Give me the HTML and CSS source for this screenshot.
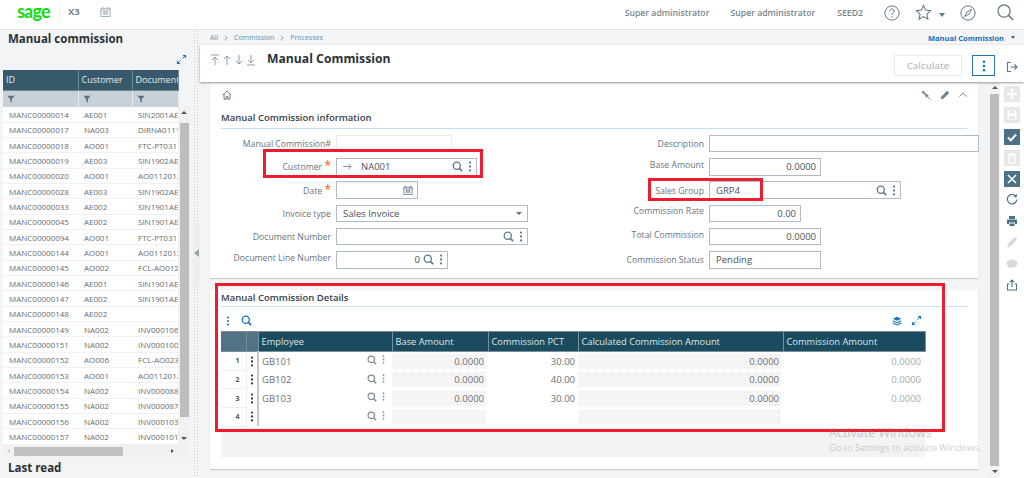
FILE: index.html
```html
<!DOCTYPE html>
<html lang="en">
<head>
<meta charset="utf-8">
<title>Manual Commission</title>
<link rel="stylesheet" href="styles.css">
</head>
<body>
<svg class="defs" width="0" height="0" aria-hidden="true">
  <symbol id="search" viewBox="0 0 12 12"><circle cx="5.2" cy="5.2" r="3.9" fill="none" stroke="currentColor" stroke-width="1.4"/><path d="M8 8l3 3" stroke="currentColor" stroke-width="1.8" fill="none"/></symbol>
  <symbol id="kebab" viewBox="0 0 4 12"><circle cx="2" cy="1.7" r="1.25" fill="currentColor"/><circle cx="2" cy="6" r="1.25" fill="currentColor"/><circle cx="2" cy="10.3" r="1.25" fill="currentColor"/></symbol>
  <symbol id="expand" viewBox="0 0 12 12"><path d="M7 1h4v4zM1 7v4h4z" fill="currentColor"/><path d="M9.5 2.5L7 5M2.5 9.5L5 7" stroke="currentColor" fill="none"/></symbol>
  <symbol id="funnel" viewBox="0 0 10 10"><path d="M.5 1h9L6 5v4.500L4 8V5z" fill="currentColor"/></symbol>
  <symbol id="cal" viewBox="0 0 12 12"><path d="M1 2.500h10v9H1z" fill="none" stroke="currentColor"/><path d="M1 4.500h10M3 1v2M9 1v2M3 6.500h6M3 8.500h6M4.500 5v5M7.500 5v5" stroke="currentColor" stroke-width=".8" fill="none"/></symbol>
</svg>

<header class="topbar">
  <div class="brand"><span class="sage">sage</span><span class="x3">X3</span><svg class="top-cal"><use href="#cal"/></svg></div>
  <nav class="top-links">
    <span class="top-link user-a">Super administrator</span>
    <span class="top-link user-b">Super administrator</span>
    <span class="top-link seed">SEED2</span>
    <svg class="ti help" viewBox="0 0 18 18"><circle cx="9" cy="9" r="8" fill="none" stroke="currentColor" stroke-width="1.100"/><path d="M6.500 7a2.500 2.500 0 1 1 3.900 2c-1 .7-1.400 1.100-1.400 2.200" fill="none" stroke="currentColor" stroke-width="1.100"/><circle cx="9" cy="13.500" r=".8" fill="currentColor"/></svg>
    <svg class="ti star" viewBox="0 0 18 18"><path d="M9 1.500l2.300 5 5.200.6-3.900 3.600 1.100 5.300L9 13.300 4.300 16l1.100-5.300-3.900-3.600 5.200-.6z" fill="none" stroke="currentColor" stroke-width="1.100"/></svg>
    <span class="caret"></span>
    <svg class="ti compass" viewBox="0 0 18 18"><circle cx="9" cy="9" r="8" fill="none" stroke="currentColor" stroke-width="1.100"/><path d="M13 5L10.200 10.200 5 13 7.800 7.800z" fill="none" stroke="currentColor"/></svg>
    <svg class="ti glass" viewBox="0 0 18 18"><circle cx="7.500" cy="7.500" r="6.500" fill="none" stroke="currentColor" stroke-width="1.300"/><path d="M12 12l5 5" stroke="currentColor" stroke-width="1.600"/></svg>
  </nav>
</header>

<div class="app">
  <aside class="side">
    <h2 class="side-title">Manual commission</h2>
    <div class="side-expand"><svg class="ic-exp"><use href="#expand"/></svg></div>
    <div class="list-wrap">
      <div class="list-main">
        <table class="list">
          <colgroup><col class="c-id"><col class="c-cu"><col class="c-do"></colgroup>
          <thead>
            <tr class="list-head"><th>ID</th><th>Customer</th><th>Document</th></tr>
            <tr class="list-filter"><th><svg class="fn"><use href="#funnel"/></svg></th><th><svg class="fn"><use href="#funnel"/></svg></th><th><svg class="fn"><use href="#funnel"/></svg></th></tr>
          </thead>
          <tbody>
            <tr><td>MANC00000014</td><td>AE001</td><td>SIN2001AE</td></tr>
            <tr><td>MANC00000017</td><td>NA003</td><td>DIRNA0111</td></tr>
            <tr><td>MANC00000018</td><td>AO001</td><td>FTC-PT031</td></tr>
            <tr><td>MANC00000019</td><td>AE003</td><td>SIN1902AE</td></tr>
            <tr><td>MANC00000020</td><td>AO001</td><td>AO0112012</td></tr>
            <tr><td>MANC00000028</td><td>AE003</td><td>SIN1902AE</td></tr>
            <tr><td>MANC00000033</td><td>AE002</td><td>SIN1901AE</td></tr>
            <tr><td>MANC00000045</td><td>AE002</td><td>SIN1901AE</td></tr>
            <tr><td>MANC00000094</td><td>AO001</td><td>FTC-PT031</td></tr>
            <tr><td>MANC00000144</td><td>AO001</td><td>AO0112012</td></tr>
            <tr><td>MANC00000145</td><td>AO002</td><td>FCL-AO012</td></tr>
            <tr><td>MANC00000146</td><td>AE001</td><td>SIN1901AE</td></tr>
            <tr><td>MANC00000147</td><td>AE002</td><td>SIN1901AE</td></tr>
            <tr><td>MANC00000148</td><td>AE002</td><td></td></tr>
            <tr><td>MANC00000149</td><td>NA002</td><td>INV0001060</td></tr>
            <tr><td>MANC00000151</td><td>NA002</td><td>INV0001000</td></tr>
            <tr><td>MANC00000152</td><td>AO006</td><td>FCL-AO023</td></tr>
            <tr><td>MANC00000153</td><td>AO001</td><td>AO0112012</td></tr>
            <tr><td>MANC00000154</td><td>NA002</td><td>INV0000880</td></tr>
            <tr><td>MANC00000155</td><td>NA002</td><td>INV0000870</td></tr>
            <tr><td>MANC00000156</td><td>NA002</td><td>INV0001030</td></tr>
            <tr><td>MANC00000157</td><td>NA002</td><td>INV0001010</td></tr>
          </tbody>
        </table>
        <div class="hscroll"><span class="arrow-l"></span><span class="hthumb"></span><span class="arrow-r"></span></div>
      </div>
      <div class="vscroll"><span class="arrow-u"></span><span class="vthumb"></span><span class="arrow-d"></span></div>
    </div>
    <h2 class="side-foot">Last read</h2>
  </aside>

  <div class="split"><div class="split-handle"><span class="split-arrow"></span></div></div>

  <main class="main">
    <div class="crumbs">
      <div class="crumb-left"><span>All</span><i class="chev"></i><span>Commission</span><i class="chev"></i><span>Processes</span></div>
      <div class="crumb-right">Manual Commission<span class="crumb-caret"></span></div>
    </div>
    <div class="toolbar">
      <div class="nav-arrows">
        <svg class="na" viewBox="0 0 10 12"><path d="M1 1h8M5 3.500V11M2 6l3-3 3 3" fill="none" stroke="currentColor" stroke-width=".9"/></svg>
        <svg class="na" viewBox="0 0 10 12"><path d="M5 2v9M2 5l3-3 3 3" fill="none" stroke="currentColor" stroke-width=".9"/></svg>
        <svg class="na" viewBox="0 0 10 12"><path d="M5 1v9M2 7l3 3 3-3" fill="none" stroke="currentColor" stroke-width=".9"/></svg>
        <svg class="na" viewBox="0 0 10 12"><path d="M1 11h8M5 1v7.500M2 6l3 3 3-3" fill="none" stroke="currentColor" stroke-width=".9"/></svg>
      </div>
      <h1 class="page-title">Manual Commission</h1>
      <button class="calc">Calculate</button>
      <button class="more"><svg class="more-ic"><use href="#kebab"/></svg></button>
      <svg class="exit" viewBox="0 0 12 12"><path d="M5 1.500H1.500v9H5M4.500 6h6.500M8.500 3.500L11 6 8.500 8.500" fill="none" stroke="currentColor" stroke-width="1.100"/></svg>
    </div>

    <div class="work">
      <div class="content">
        <section class="card card-info">
          <div class="card-tools">
            <svg class="home" viewBox="0 0 12 12"><path d="M1 6l5-5 5 5M2.500 5v6h2.500V8h2v3h2.500V5" fill="none" stroke="currentColor" stroke-width=".9"/></svg>
            <span class="spacer"></span>
            <svg class="tool" viewBox="0 0 12 12"><path d="M1.500 3.500L3.500 1.500M3 3l5 5M6 8.500L8.500 6" fill="none" stroke="currentColor" stroke-width="2"/><path d="M8 8l3.500 3.500" fill="none" stroke="currentColor"/></svg>
            <svg class="tool" viewBox="0 0 12 12"><path d="M8.500 1L11 3.500 4 10.500 1 11l.5-3z" fill="currentColor"/></svg>
            <svg class="tool tool-last" viewBox="0 0 12 12"><path d="M1.500 8L6 3.500 10.500 8" fill="none" stroke="currentColor" stroke-width="1.100"/></svg>
          </div>
          <h3 class="sec-title">Manual Commission information</h3>
          <div class="form">
            <div class="col col-l">
              <div class="row"><label>Manual Commission#</label><div class="inp w116 faint"></div></div>
              <div class="row"><label>Customer <b class="req">*</b></label><div class="inp w141"><svg class="arrow-go" viewBox="0 0 10 8"><path d="M0 4h9M6 1l3 3-3 3" fill="none" stroke="currentColor"/></svg><span class="val grow">NA001</span><svg class="s"><use href="#search"/></svg><svg class="k"><use href="#kebab"/></svg></div></div>
              <div class="row"><label>Date <b class="req">*</b></label><div class="inp w82"><span class="grow"></span><svg class="datecal"><use href="#cal"/></svg></div></div>
              <div class="row"><label>Invoice type</label><div class="inp w192"><span class="val grow">Sales Invoice</span><span class="drop"></span></div></div>
              <div class="row"><label>Document Number</label><div class="inp w192"><span class="grow"></span><svg class="s"><use href="#search"/></svg><svg class="k"><use href="#kebab"/></svg></div></div>
              <div class="row up"><label>Document Line Number</label><div class="inp w112"><span class="val grow num">0</span><svg class="s"><use href="#search"/></svg><svg class="k"><use href="#kebab"/></svg></div></div>
            </div>
            <div class="col col-r">
              <div class="row"><label>Description</label><div class="inp w270"></div></div>
              <div class="row up"><label>Base Amount</label><div class="inp w112"><span class="val grow num">0.0000</span></div></div>
              <div class="row"><label>Sales Group</label><div class="inp w192"><span class="val grow">GRP4</span><svg class="s"><use href="#search"/></svg><svg class="k"><use href="#kebab"/></svg></div></div>
              <div class="row up"><label>Commission Rate</label><div class="inp w92"><span class="val grow num">0.00</span></div></div>
              <div class="row up"><label>Total Commission</label><div class="inp w112"><span class="val grow num">0.0000</span></div></div>
              <div class="row"><label>Commission Status</label><div class="inp w112"><span class="val grow">Pending</span></div></div>
            </div>
          </div>
        </section>

        <section class="card card-details">
          <h3 class="sec-title">Manual Commission Details</h3>
          <div class="grid-tools">
            <svg class="gt-k"><use href="#kebab"/></svg>
            <svg class="gt-s"><use href="#search"/></svg>
            <span class="spacer"></span>
            <svg class="gt-l" viewBox="0 0 12 12"><path d="M6 .8l5 2.400-5 2.400-5-2.400z" fill="currentColor"/><path d="M1 5.700l5 2.300 5-2.300M1 8.300l5 2.400 5-2.400" fill="none" stroke="currentColor" stroke-width="1.300"/></svg>
            <svg class="gt-e"><use href="#expand"/></svg>
          </div>
          <table class="grid">
            <colgroup><col class="g-n"><col class="g-m"><col class="g-e"><col class="g-b"><col class="g-p"><col class="g-c"><col class="g-a"></colgroup>
            <thead>
              <tr><th class="h-light"></th><th class="h-light"></th><th>Employee</th><th>Base Amount</th><th>Commission PCT</th><th>Calculated Commission Amount</th><th>Commission Amount</th></tr>
            </thead>
            <tbody>
              <tr><td class="n">1</td><td class="m"><svg class="gk"><use href="#kebab"/></svg></td><td class="e"><div class="e-in"><span class="grow">GB101</span><svg class="gs"><use href="#search"/></svg><svg class="gk2"><use href="#kebab"/></svg></div></td><td class="dot"><div class="dots">0.0000</div></td><td class="r">30.00</td><td class="dot"><div class="dots">0.0000</div></td><td class="r lite">0.0000</td></tr>
              <tr><td class="n">2</td><td class="m"><svg class="gk"><use href="#kebab"/></svg></td><td class="e"><div class="e-in"><span class="grow">GB102</span><svg class="gs"><use href="#search"/></svg><svg class="gk2"><use href="#kebab"/></svg></div></td><td class="dot"><div class="dots">0.0000</div></td><td class="r">40.00</td><td class="dot"><div class="dots">0.0000</div></td><td class="r lite">0.0000</td></tr>
              <tr><td class="n">3</td><td class="m"><svg class="gk"><use href="#kebab"/></svg></td><td class="e"><div class="e-in"><span class="grow">GB103</span><svg class="gs"><use href="#search"/></svg><svg class="gk2"><use href="#kebab"/></svg></div></td><td class="dot"><div class="dots">0.0000</div></td><td class="r">30.00</td><td class="dot"><div class="dots">0.0000</div></td><td class="r lite">0.0000</td></tr>
              <tr><td class="n">4</td><td class="m"><svg class="gk"><use href="#kebab"/></svg></td><td class="e"><div class="e-in"><span class="grow"></span><svg class="gs"><use href="#search"/></svg><svg class="gk2"><use href="#kebab"/></svg></div></td><td class="dot"><div class="dots">&nbsp;</div></td><td class="r"></td><td class="dot"><div class="dots">&nbsp;</div></td><td class="r lite"></td></tr>
            </tbody>
          </table>
          <div class="grid-foot"></div>
        </section>
      </div>

      <div class="main-scroll"><span class="arrow-u"></span><span class="mthumb"></span><span class="arrow-d"></span></div>

      <div class="rail">
        <span class="rb off"><svg viewBox="0 0 12 12"><path d="M6 1v10M1 6h10" stroke="#fff" stroke-width="2.400"/></svg></span>
        <span class="rb off"><svg viewBox="0 0 12 12"><path d="M1.500 1.500h7.500l1.500 1.500v7.500h-9z" fill="#fff"/><path d="M3.500 2h4v2.500h-4zM3 7h6v3H3z" fill="#e4e8ea"/></svg></span>
        <span class="rb on"><svg viewBox="0 0 12 12"><path d="M2 6.500l2.800 2.800L10 3.500" fill="none" stroke="#fff" stroke-width="2"/></svg></span>
        <span class="rb off"><svg viewBox="0 0 12 12"><path d="M3 4h6v7H3zM2 2.500h8M4.500 2.500V1.500h3v1" fill="none" stroke="#fff" stroke-width="1.200"/></svg></span>
        <span class="rb on"><svg viewBox="0 0 12 12"><path d="M2 2l8 8M10 2l-8 8" stroke="#fff" stroke-width="1.600"/></svg></span>
        <span class="rp"><svg viewBox="0 0 12 12"><path d="M10 3.500A4.700 4.700 0 1 0 10.800 6.500" fill="none" stroke="#4d7287" stroke-width="1.200"/><path d="M10.800 .8v3.400H7.400z" fill="#4d7287"/></svg></span>
        <span class="rp"><svg viewBox="0 0 12 12"><path d="M3 1h6v3H3zM1 4.500h10v4.500H9V7.500H3V9H1zM3.500 8.500h5V11h-5z" fill="#4d7287"/></svg></span>
        <span class="rp"><svg viewBox="0 0 12 12"><path d="M3 9.500L9 3" fill="none" stroke="#d7dadc" stroke-width="3.500" stroke-linecap="round"/></svg></span>
        <span class="rp"><svg viewBox="0 0 12 12"><ellipse cx="6" cy="5.500" rx="5.500" ry="4" fill="#d7dadc"/><path d="M3 8l-.8 2.800L6 9z" fill="#d7dadc"/></svg></span>
        <span class="rp"><svg viewBox="0 0 12 12"><path d="M3.500 5H1.500v6h9V5h-2M6 8V1M3.800 3.200L6 1l2.200 2.200" fill="none" stroke="#4d7287" stroke-width="1.100"/></svg></span>
      </div>
    </div>
  </main>
</div>

<div class="mark mark-customer"></div>
<div class="mark mark-group"></div>
<div class="mark mark-details"></div>
<div class="watermark"><div class="wm-1">Activate Windows</div><div class="wm-2">Go to Settings to activate Windows.</div></div>
</body>
</html>
```
FILE: styles.css
```css
* { box-sizing: border-box; }
html, body { margin: 0; height: 478px; overflow: hidden; }
body { position: relative; width: 1024px; font-family: "Open Sans", sans-serif; font-size: 9px; color: #5d6a72; background: #f2f4f5; display: flex; flex-direction: column; }
.defs { position: absolute; }
svg { display: block; flex: none; }
h1, h2, h3 { margin: 0; }

/* top bar */
.topbar { height: 30px; flex: none; background: #fff; border-bottom: 1px solid #e3e7e9; display: flex; align-items: center; justify-content: space-between; }
.brand { display: flex; align-items: center; height: 100%; padding-bottom: 6px; }
.sage { font-family: "Lato", sans-serif; font-weight: 700; font-size: 18px; letter-spacing: -.8px; color: #10dd10; margin-left: 17px; width: 43px; line-height: 19px; border-right: 1px solid #f0f2f3; height: 20px; }
.x3 { font-weight: 700; font-size: 9.500px; color: #7a858c; margin-left: 8px; }
.top-cal { width: 11px; height: 11px; margin-left: 20px; color: #97a7b1; }
.top-links { display: flex; align-items: center; color: #6d818d; height: 100%; padding-bottom: 4px; }
.top-link { font-size: 8.700px; font-weight: 600; color: #76858e; }
.user-b { margin-left: 21px; }
.seed { margin-left: 22px; }
.ti { color: #5a7888; }
.help { width: 16px; height: 16px; margin-left: 21px; }
.star { width: 17px; height: 17px; margin-left: 15px; }
.caret { width: 0; height: 0; border: 3px solid transparent; border-top: 4px solid #5a7888; border-bottom: 0; margin: 5px 0 0 7px; }
.compass { width: 16px; height: 16px; margin-left: 15px; }
.glass { width: 17px; height: 17px; margin: 0 10px 0 21px; }

.app { flex: 1; display: flex; min-height: 0; }

/* side panel */
.side { width: 193px; flex: none; display: flex; flex-direction: column; padding-left: 3px; }
.side-title { font-size: 11.500px; font-weight: 700; color: #2a3238; line-height: 16px; margin: 0 0 0 5px; padding-top: 1px; height: 16px; }
.side-expand { height: 24px; display: flex; justify-content: flex-end; padding: 8px 6px 0 0; }
.ic-exp { width: 11px; height: 11px; color: #1673c5; }
.list-wrap { display: flex; width: 187px; }
.list-main { width: 175px; }
.list { table-layout: fixed; border-collapse: collapse; width: 175px; background: #fff; }
.c-id { width: 75px; } .c-cu { width: 54px; } .c-do { width: 46px; }
.list th { font-weight: 400; text-align: left; overflow: hidden; white-space: nowrap; padding: 0 0 0 3px; }
.list-head th { height: 20px; background: #37596b; color: #e6ecef; font-size: 9px; border-right: 1px solid #6f8895; border-bottom: 1px solid #6f8895; }
.list-filter th { height: 17px; background: #c7d1d7; border-right: 1px solid #e5e9ec; vertical-align: middle; }
.fn { width: 8px; height: 8px; color: #537285; margin-left: 1px; }
.list td { height: 15.330px; padding: 0 0 0 6px; font-size: 8px; white-space: nowrap; overflow: hidden; color: #646d72; border-bottom: 1px solid #f0f1f2; }
.hscroll { height: 13px; width: 187px; background: #f1f1f1; display: flex; align-items: center; padding: 0 4px; }
.hthumb { width: 109px; height: 9px; background: #c1c1c1; margin-left: 4px; }
.arrow-l { width: 0; height: 0; border: 2px solid transparent; border-right: 3px solid #c9c9c9; border-left: 0; }
.arrow-r { width: 0; height: 0; border: 2.500px solid transparent; border-left: 3px solid #555; border-right: 0; margin-left: 48px; }
.vscroll { width: 12px; margin-top: 37px; height: 338px; background: #f1f1f1; display: flex; flex-direction: column; align-items: center; }
.vthumb { width: 9px; height: 294px; margin-top: 9px; background: #bdbdbd; }
.arrow-u { width: 0; height: 0; border: 3px solid transparent; border-bottom: 3px solid #555; border-top: 0; margin-top: 4px; }
.arrow-d { width: 0; height: 0; border: 3px solid transparent; border-top: 3px solid #555; border-bottom: 0; margin-top: auto; margin-bottom: 5px; }
.side-foot { font-size: 11.500px; font-weight: 700; color: #2a3238; margin: 0 0 0 5px; line-height: 16px; padding-top: 2px; }

.split { width: 7px; flex: none; display: flex; align-items: center; justify-content: center; padding-bottom: 2px; background-image: radial-gradient(#c7cdd1 .7px, transparent .8px); background-size: 3px 3px; }
.split-handle { width: 7px; height: 63px; background: #ecedec; display: flex; align-items: center; justify-content: center; }
.split-arrow { width: 0; height: 0; border: 4px solid transparent; border-right: 5px solid #9aa3a8; border-left: 0; }

/* main */
.main { flex: 1; min-width: 0; display: flex; flex-direction: column; }
.crumbs { height: 15px; flex: none; display: flex; align-items: center; justify-content: space-between; padding: 0 9px 0 10px; font-size: 7px; color: #5a93c4; }
.crumb-left { display: flex; align-items: center; }
.chev { width: 4px; height: 4px; border-top: 1px solid #b3bcc2; border-right: 1px solid #b3bcc2; transform: rotate(45deg); margin: 0 7px 0 5px; }
.crumb-right { font-weight: 700; color: #1c6fbc; display: flex; align-items: center; font-size: 7.500px; }
.crumb-caret { width: 0; height: 0; border: 2px solid transparent; border-top: 3px solid #1c6fbc; border-bottom: 0; margin-left: 7px; }
.toolbar { height: 37px; flex: none; background: #fff; display: flex; align-items: flex-start; box-shadow: 0 1px 2px rgba(60,70,75,.55); position: relative; padding-left: 10px; }
.nav-arrows { display: flex; gap: 2px; color: #7f959f; margin-top: 9px; width: 57px; }
.na { width: 10px; height: 12px; }
.page-title { font-size: 12.200px; font-weight: 700; color: #2a3238; line-height: 18px; margin-top: 5px; flex: 1; }
.calc { width: 68px; height: 21px; margin-top: 10px; background: #fff; border: 1px solid #e8eaeb; color: #bdc0c3; font: 600 9.500px "Open Sans", sans-serif; padding: 0; }
.more { width: 23px; height: 21px; margin: 10px 0 0 10px; background: #fff; border: 1px solid #2276b6; padding: 0; display: flex; align-items: center; justify-content: center; }
.more-ic { width: 4px; height: 12px; color: #1673bc; }
.exit { width: 12px; height: 12px; margin: 16px 6px 0 11px; color: #587684; }

.work { flex: 1; display: flex; min-height: 0; }
.content { width: 790px; padding: 1px 0 0 10px; flex: none; }
.card { width: 768px; background: #fff; box-shadow: 0 1px 1px #c9cccd; padding: 0 11px; }
.card-info { height: 195px; }
.card-details { height: 179px; margin-top: 12px; }
.card-tools { height: 22px; display: flex; align-items: center; padding: 1px 0 0 1px; color: #56666f; }
.home { width: 10px; height: 10px; color: #444f55; }
.spacer { flex: 1; }
.tool { width: 10px; height: 10px; margin-left: 9px; color: #68828f; }
.tool-last { margin: 0 -1px 0 8px; }
.sec-title { font-size: 9.500px; font-weight: 600; color: #33424c; line-height: 25px; height: 24px; border-bottom: 1px solid #c3e0f3; }
.card-details .sec-title { height: 17px; line-height: 16px; }
.form { display: flex; padding-top: 6px; }
.col { display: flex; flex-direction: column; gap: 6.300px; }
.col-l { width: 283px; }
.row { display: flex; height: 17px; align-items: center; }
.row label { text-align: right; flex: none; padding: 1px 5px 0 0; color: #66757e; font-size: 8.700px; white-space: nowrap; }
.row.up label { padding: 0 5px 4px 0; }
.col-l label { width: 115px; }
.col-r label { width: 205px; }
.req { color: #f05a22; font-size: 12px; font-weight: 400; line-height: 9px; }
.inp { height: 17.500px; border: 1px solid #adbcc6; display: flex; align-items: center; padding: 0 4px; background: #fff; flex: none; }
.faint { border-color: #e7ebee; }
.w116 { width: 116px; } .w141 { width: 141px; } .w82 { width: 82px; } .w192 { width: 192px; } .w112 { width: 112px; } .w270 { width: 270px; } .w92 { width: 92px; }
.val { font-size: 9.500px; color: #4c5358; padding-left: 2px; }
.grow { flex: 1; min-width: 0; }
.num { text-align: right; }
.arrow-go { color: #6c8492; width: 9px; height: 7px; margin: 0 7px 0 2px; }
.s { width: 11px; height: 11px; color: #587888; margin-left: 3px; }
.k { width: 4px; height: 11px; color: #687f8c; margin-left: 5px; }
.datecal { width: 10px; height: 10px; color: #5f7a89; }
.drop { width: 0; height: 0; border: 3px solid transparent; border-top: 3px solid #5a7080; border-bottom: 0; margin-right: 1px; }

/* details */
.grid-tools { height: 24px; display: flex; align-items: center; padding-top: 3px; color: #1673bc; width: 704px; }
.gt-k { width: 4px; height: 10px; margin-left: 5px; color: #1673bc; }
.gt-s { width: 11px; height: 11px; margin-left: 11px; color: #1673bc; }
.gt-l { width: 10px; height: 10px; color: #1673bc; }
.gt-e { width: 11px; height: 11px; margin: 0 3px 0 9px; color: #1673c5; }
.grid { table-layout: fixed; border-collapse: collapse; width: 704px; }
.g-n { width: 25px; } .g-m { width: 12px; } .g-e { width: 134px; } .g-b { width: 96px; } .g-p { width: 90px; } .g-c { width: 205px; } .g-a { width: 142px; }
.grid th { height: 20px; background: #1b4b5f; color: #dde6ea; font-weight: 400; font-size: 9.300px; text-align: left; padding: 0 0 0 3px; border: 1px solid #7b8f99; border-width: 1px 1px 1px 0; white-space: nowrap; overflow: hidden; }
.grid th.h-light { background: #527285; }
.grid td { height: 18.700px; padding: 0; font-size: 9.500px; color: #6a6f72; }
.grid .n { text-align: right; padding-right: 6px; font-size: 7px; font-weight: 700; color: #555; border-bottom: 1px solid #eceeef; border-right: 1px solid #eceeef; }
.grid .m { border-right: 2px solid #c2c7ca; }
.gk { width: 4px; height: 11px; color: #303c42; margin: 0 auto; }
.e-in { display: flex; align-items: center; padding: 0 2px 0 3px; }
.gs { width: 10px; height: 10px; color: #7d8a91; margin-top: -2px; }
.gk2 { width: 3px; height: 9px; color: #8b979e; margin: -3px 5px 0 5px; }
.r { text-align: right; padding-right: 3px !important; }
.dots { height: 15px; margin-right: 2px; padding-right: 2px; text-align: right; line-height: 15px; background: repeating-conic-gradient(#ececec 0 25%, #fff 0 50%) 0 0 / 2px 2px; }
.grid td.lite { color: #a6aaac; padding-right: 4px !important; }
.grid-foot { height: 29px; width: 704px; background: #f2f3f4; margin-top: 1px; }

.main-scroll { width: 9px; background: #f1f1f1; display: flex; flex-direction: column; align-items: center; flex: none; }
.mthumb { width: 9px; height: 372px; margin-top: 5px; background: #bcbcbc; }
.rail { flex: 1; background: #fff; margin-left: 1px; display: flex; flex-direction: column; align-items: center; padding-top: 4px; }
.rb { width: 16px; height: 16px; margin-bottom: 5.300px; display: flex; align-items: center; justify-content: center; }
.rb svg { width: 12px; height: 12px; }
.off { background: #e4e8ea; }
.on { background: #4d7287; }
.rp { width: 12px; height: 12px; margin-bottom: 9.500px; }
.rb + .rp { margin-top: 1px; }
.rp svg { width: 12px; height: 12px; }

/* overlays */
.mark { position: absolute; border: 3px solid #ee1c2e; pointer-events: none; }
.mark-customer { left: 263px; top: 149px; width: 220px; height: 29px; }
.mark-group { left: 648px; top: 178px; width: 115px; height: 23px; }
.mark-details { left: 215px; top: 283px; width: 730px; height: 149px; }
.watermark { position: absolute; left: 829px; top: 424px; color: rgba(120,125,128,.4); white-space: nowrap; }
.wm-1 { font-size: 12.500px; line-height: 17px; }
.wm-2 { font-size: 9.300px; line-height: 14px; }
```
